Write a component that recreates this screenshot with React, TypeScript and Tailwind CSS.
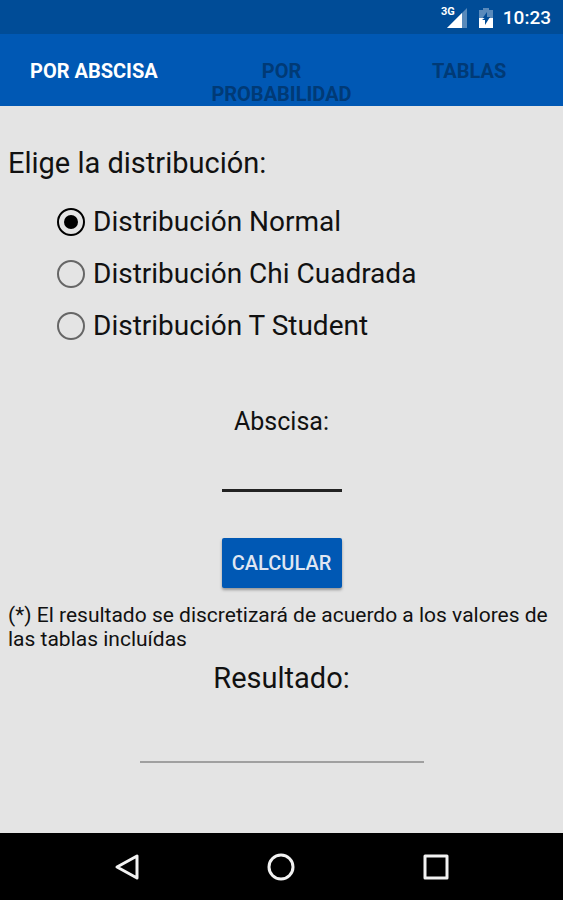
import { useState } from "react";
import clsx from "clsx";

const TABS = ["Por abscisa", "Por probabilidad", "Tablas"];

const DISTRIBUTIONS = [
  { id: "normal", label: "Distribución Normal" },
  { id: "chi", label: "Distribución Chi Cuadrada" },
  { id: "student", label: "Distribución T Student" },
];

function StatusBar() {
  return (
    <header className="flex h-[34px] items-center justify-end bg-[#004c97] pt-[2px] pr-3 text-white">
      <span className="mb-3 text-[11px] leading-3 font-bold">3G</span>
      <svg className="-ml-2 h-5 w-5" viewBox="0 0 20 20" aria-hidden="true">
        <path d="M20 0v20H0z" fill="#fff" opacity="0.35" />
        <path d="M15 5v15H0z" fill="#fff" />
      </svg>
      <svg className="ml-3 h-5 w-[14px]" viewBox="0 0 14 20" aria-hidden="true">
        <path d="M4 0h6v2h4v8H0V2h4z" fill="#fff" opacity="0.35" />
        <path d="M8 4v5h3l-1 2H3z" fill="#004c97" />
        <path d="M0 10h14v10H0z" fill="#fff" />
        <path d="M7 9h4l-5 8v-5H3z" fill="#004c97" />
      </svg>
      <span className="ml-[10px] text-[19px] leading-6 font-medium">10:23</span>
    </header>
  );
}

function Tabs() {
  const [active, setActive] = useState(0);

  return (
    <nav className="grid h-[72px] grid-cols-3 bg-[#0058b4]">
      {TABS.map((tab, i) => (
        <button
          key={tab}
          type="button"
          onClick={() => setActive(i)}
          className={clsx(
            "flex items-start justify-center px-5 pt-[26px] text-[20px] leading-[23px] font-bold uppercase",
            i === active ? "text-white" : "text-[#003a76]"
          )}
        >
          {tab}
        </button>
      ))}
    </nav>
  );
}

function NavigationBar() {
  return (
    <footer className="grid h-[67px] grid-cols-3 items-center bg-black px-[50px]">
      <button type="button" aria-label="Atrás" className="flex justify-center">
        <svg className="h-7 w-7" viewBox="0 0 28 28" fill="none" stroke="#f2f2f2" strokeWidth="3" strokeLinejoin="round">
          <path d="M24 3v22L4 14z" />
        </svg>
      </button>
      <button type="button" aria-label="Inicio" className="flex justify-center">
        <svg className="h-7 w-7" viewBox="0 0 28 28" fill="none" stroke="#f2f2f2" strokeWidth="3">
          <circle cx="14" cy="14" r="12" />
        </svg>
      </button>
      <button type="button" aria-label="Recientes" className="flex justify-center">
        <svg className="h-7 w-7" viewBox="0 0 28 28" fill="none" stroke="#f2f2f2" strokeWidth="3" strokeLinejoin="round">
          <rect x="3" y="3" width="22" height="22" />
        </svg>
      </button>
    </footer>
  );
}

export default function App() {
  const [distribution, setDistribution] = useState("normal");

  return (
    <div className="flex min-h-screen flex-col bg-[#e4e4e4] font-['Roboto',sans-serif] text-[#111111]">
      <StatusBar />
      <Tabs />

      <main className="flex flex-1 flex-col px-2 pt-10">
        <fieldset>
          <legend className="text-[29px] leading-[34px]">Elige la distribución:</legend>
          <div className="mt-4 pl-[49px]">
            {DISTRIBUTIONS.map(({ id, label }) => (
              <label key={id} className="flex h-[52px] items-center gap-2 text-[28px] leading-[34px]">
                <input
                  type="radio"
                  name="distribution"
                  value={id}
                  checked={distribution === id}
                  onChange={() => setDistribution(id)}
                  className="grid h-7 w-7 shrink-0 appearance-none place-items-center rounded-full border-2 border-[#666666] before:h-[14px] before:w-[14px] before:rounded-full checked:border-black checked:before:bg-black"
                />
                {label}
              </label>
            ))}
          </div>
        </fieldset>

        <div className="mt-14 flex flex-col items-center">
          <label htmlFor="abscisa" className="text-[25px] leading-7">
            Abscisa:
          </label>
          <input
            id="abscisa"
            type="text"
            inputMode="decimal"
            className="mt-4 h-10 w-[120px] border-b-[3px] border-[#222222] text-center text-[25px] outline-none"
          />
          <button
            type="button"
            className="mt-[46px] h-[50px] w-[120px] rounded-xs bg-[#0058b4] text-[20px] leading-6 font-medium text-[#dfe6f2] uppercase shadow-[0_2px_3px_rgba(0,0,0,0.35)]"
          >
            Calcular
          </button>
        </div>

        <p className="mt-[15px] text-[21px] leading-6">
          (*) El resultado se discretizará de acuerdo a los valores de las tablas incluídas
        </p>

        <div className="mt-[10px] flex flex-col items-center">
          <label htmlFor="resultado" className="text-[29px] leading-[34px]">
            Resultado:
          </label>
          <input
            id="resultado"
            type="text"
            readOnly
            className="mt-7 h-10 w-[284px] border-b-2 border-[#a0a0a0] text-center text-[25px] outline-none"
          />
        </div>
      </main>

      <NavigationBar />
    </div>
  );
}
